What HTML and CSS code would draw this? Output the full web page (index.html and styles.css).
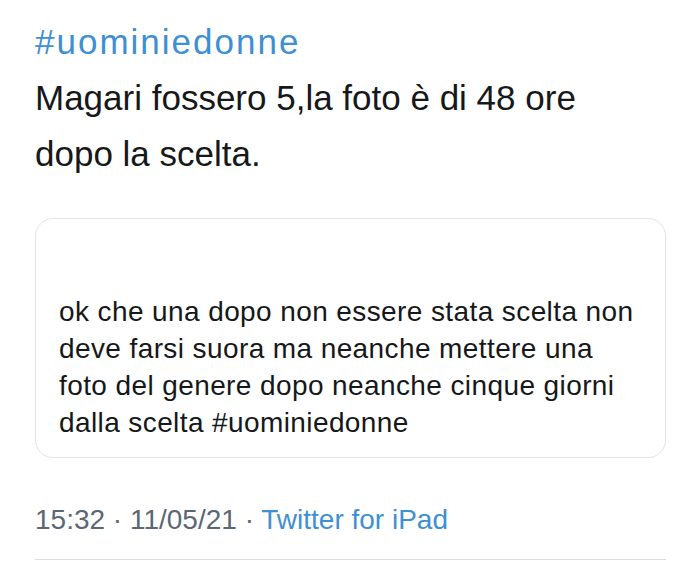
FILE: index.html
```html
<!DOCTYPE html>
<html lang="it">
<head>
<meta charset="utf-8">
<title>Tweet</title>
<link rel="stylesheet" href="styles.css">
</head>
<body>
<main class="tweet">
  <p class="tweet-text"><a class="hashtag">#uominiedonne</a><br>Magari fossero 5,la foto è di 48 ore dopo la scelta.</p>
  <section class="quote">
    <p class="quote-text">ok che una dopo non essere stata scelta non deve farsi suora ma neanche mettere una foto del genere dopo neanche cinque giorni dalla scelta #uominiedonne</p>
  </section>
  <footer class="meta">
    <span class="time">15:32 · 11/05/21 · </span><a class="source">Twitter for iPad</a>
  </footer>
  <hr class="divider">
</main>
</body>
</html>
```

FILE: styles.css
```css
html, body {
  margin: 0;
  padding: 0;
  background: #ffffff;
}

body {
  font-family: "Liberation Sans", Arial, sans-serif;
  color: #16181a;
}

.tweet {
  width: 631px;
  padding: 14px 0 0 35px;
  display: flex;
  flex-direction: column;
}

.tweet-text {
  margin: 0;
  font-size: 35px;
  line-height: 56px;
  width: 600px;
}

.hashtag {
  color: #3f8fd3;
  letter-spacing: 2px;
}

.quote {
  margin-top: 36px;
  border: 1px solid #e3e3e3;
  border-radius: 18px;
  padding: 74px 26px 16px 23px;
}

.quote-text {
  margin: 0;
  font-size: 28px;
  line-height: 37px;
  letter-spacing: 0.4px;
}

.meta {
  margin-top: 45px;
  font-size: 28px;
  line-height: 34px;
  color: #5b6775;
}

.source {
  color: #3f8fd3;
}

.divider {
  margin: 22px 0 0 0;
  border: 0;
  border-top: 1px solid #dedede;
  height: 0;
}
```
